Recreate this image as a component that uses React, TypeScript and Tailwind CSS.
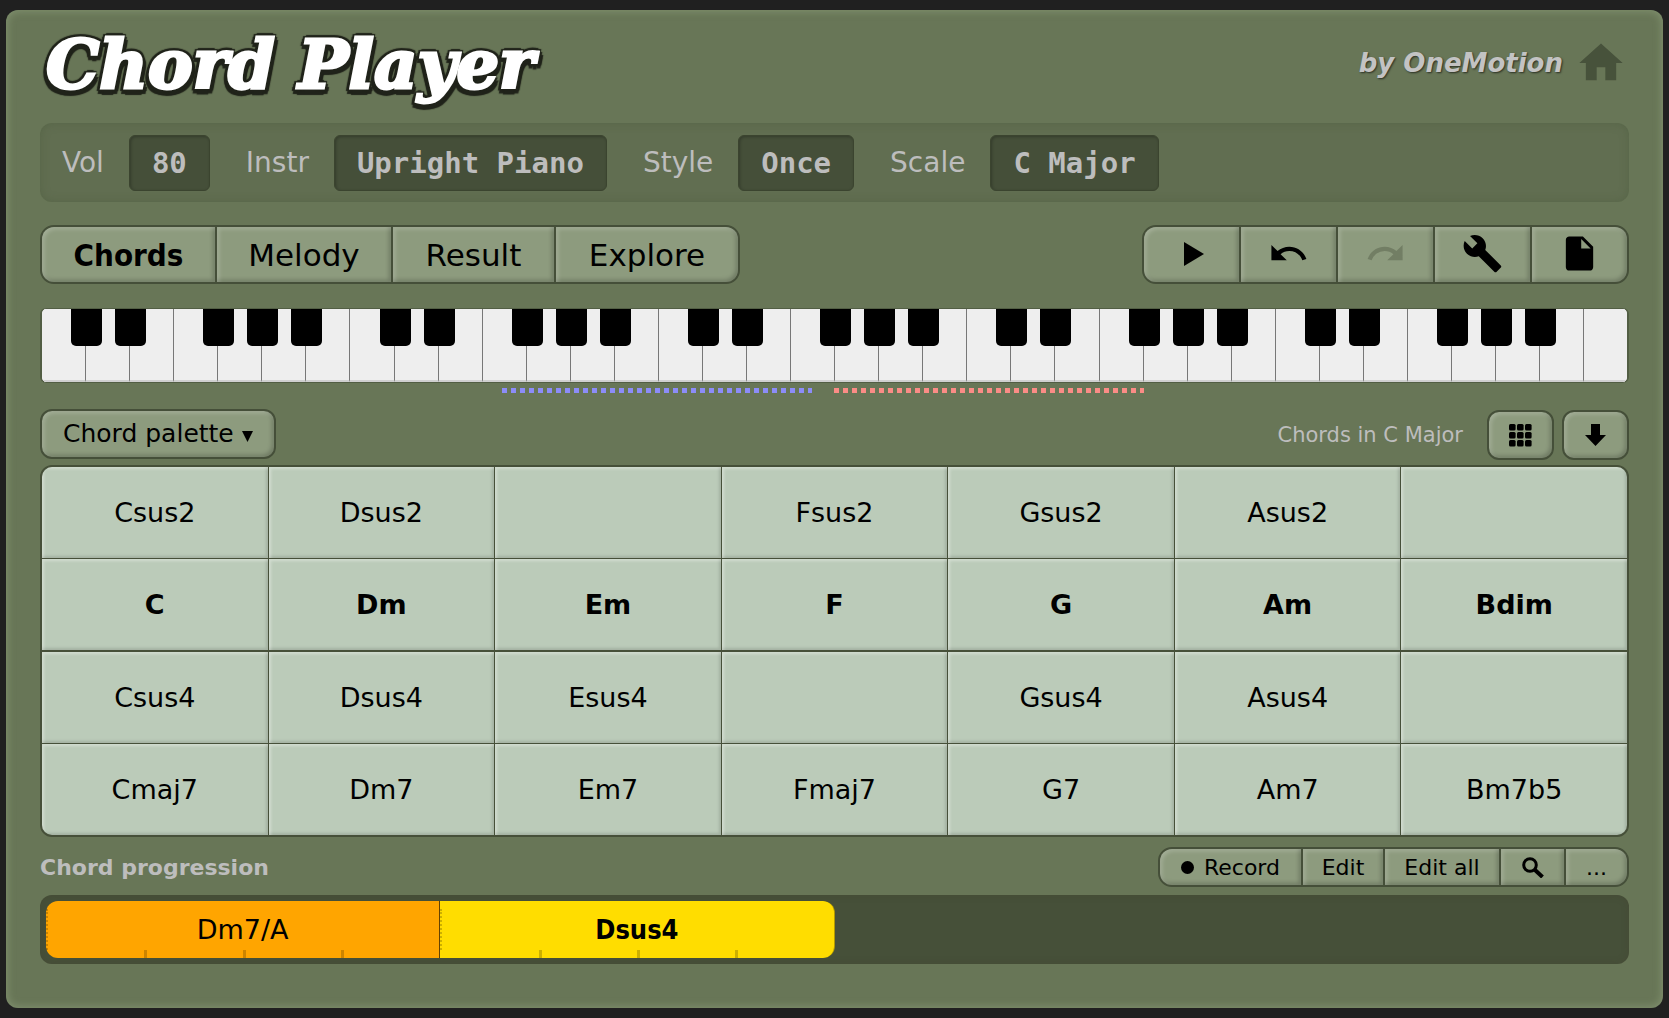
import React from "react";
import { MdBuild, MdHome, MdInsertDriveFile, MdRedo, MdUndo } from "react-icons/md";

const raised =
  "bg-[#8d9b7e] shadow-[inset_2px_2px_4px_rgba(255,255,255,0.22),inset_-2px_-2px_4px_rgba(0,0,0,0.22)]";

const settings = [
  { label: "Vol", value: "80" },
  { label: "Instr", value: "Upright Piano" },
  { label: "Style", value: "Once" },
  { label: "Scale", value: "C Major" },
];

const chordRows = [
  ["Csus2", "Dsus2", "", "Fsus2", "Gsus2", "Asus2", ""],
  ["C", "Dm", "Em", "F", "G", "Am", "Bdim"],
  ["Csus4", "Dsus4", "Esus4", "", "Gsus4", "Asus4", ""],
  ["Cmaj7", "Dm7", "Em7", "Fmaj7", "G7", "Am7", "Bm7b5"],
];

const whiteKeys = Array.from({ length: 36 }, (_, i) => ({
  id: i,
  sharp: i < 35 && i % 7 !== 2 && i % 7 !== 6,
}));

function Setting({ label, value }: { label: string; value: string }) {
  const id = `setting-${label}`;
  return (
    <div className="flex items-center gap-[25px]">
      <span id={id} className="text-[28px] leading-8 text-[#bdbdbd]">
        {label}
      </span>
      <button
        type="button"
        aria-labelledby={`${id} ${id}-value`}
        className="h-14 rounded-md border border-[#3b442f] bg-[#454f39] px-[22px] font-['DejaVu_Sans_Mono',monospace] text-[29px] font-bold leading-8 text-[#bdbdbd] shadow-[inset_1px_1px_3px_rgba(0,0,0,0.25)]"
      >
        <span id={`${id}-value`}>{value}</span>
      </button>
    </div>
  );
}

function Tab({ children, active, width }: { children: React.ReactNode; active?: boolean; width: string }) {
  return (
    <button
      type="button"
      aria-pressed={!!active}
      className={`${raised} ${width} text-[31px] leading-10 first:rounded-l-xl last:rounded-r-xl ${
        active ? "font-['DejaVu_Sans_Condensed','DejaVu_Sans',sans-serif] font-bold" : ""
      }`}
    >
      {children}
    </button>
  );
}

function ToolButton({ label, children, disabled }: { label: string; children: React.ReactNode; disabled?: boolean }) {
  return (
    <button
      type="button"
      aria-label={label}
      disabled={disabled}
      className={`${raised} flex w-[95px] items-center justify-center pb-0.5 first:rounded-l-xl last:rounded-r-xl disabled:text-[#727e64]`}
    >
      {children}
    </button>
  );
}

function SmallButton({ children, label, width }: { children: React.ReactNode; label?: string; width: string }) {
  return (
    <button
      type="button"
      aria-label={label}
      className={`${raised} ${width} flex items-center justify-center pt-px text-[22px] leading-7 first:rounded-l-xl last:rounded-r-xl`}
    >
      {children}
    </button>
  );
}

function Block({ name, color, selected }: { name: string; color: string; selected?: boolean }) {
  return (
    <button
      type="button"
      className={`relative h-full w-1/4 border-r border-black/60 text-[27px] leading-8 first:rounded-l-xl last:rounded-r-xl last:border-black/30 ${color} ${
        selected ? "font-['DejaVu_Sans_Condensed','DejaVu_Sans',sans-serif] font-bold" : ""
      }`}
    >
      {name}
      <span className="absolute inset-y-2 left-0 w-px border-l-2 border-dotted border-black/20" />
      <span className="absolute inset-x-0 bottom-0 grid h-2 grid-cols-4">
        <span />
        <span className="border-l-3 border-black/20" />
        <span className="border-l-3 border-black/20" />
        <span className="border-l-3 border-black/20" />
      </span>
    </button>
  );
}

export default function App() {
  return (
    <div className="min-h-screen bg-[#202020] px-[6px] pt-[10px] pb-[9px] font-['DejaVu_Sans',Verdana,sans-serif] text-black">
      <main className="rounded-xl bg-[#687657] px-[34px] pb-11 shadow-[inset_0_0_8px_1px_rgba(170,190,150,0.4)]">
        <header className="flex h-[113px] items-center justify-between">
          <h1 className="-mt-1 pl-1.5 font-['DejaVu_Serif',serif] text-[67px] font-bold italic leading-[80px] text-white [-webkit-text-stroke:3px_white] [text-shadow:4px_0_1px_#20231a,-4px_0_1px_#20231a,0_-4px_1px_#20231a,0_7px_1px_#20231a,3px_-3px_1px_#20231a,-3px_-3px_1px_#20231a,4px_6px_1px_#20231a,-4px_6px_1px_#20231a,5px_3px_1px_#20231a,-5px_3px_1px_#20231a]">
            Chord Player
          </h1>
          <a href="#home" className="-mt-2 flex items-center gap-3 pr-0.5 text-[26px] font-bold italic leading-8 text-[#c3c3c3] [text-shadow:1px_1px_2px_rgba(0,0,0,0.6)]">
            by OneMotion
            <MdHome className="size-[52px] text-[#47523b]" />
          </a>
        </header>

        <section className="flex h-[79px] items-center gap-9 rounded-xl bg-[#616e51] px-[22px] shadow-[inset_0_0_10px_rgba(70,85,55,0.35)]">
          {settings.map((s) => (
            <Setting key={s.label} {...s} />
          ))}
        </section>

        <div className="mt-[23px] flex h-[59px] justify-between">
          <nav className="flex gap-[2px] rounded-[14px] border-2 border-[#454f39] bg-[#454f39]">
            <Tab active width="w-[173px]">Chords</Tab>
            <Tab width="w-[174px]">Melody</Tab>
            <Tab width="w-[161px]">Result</Tab>
            <Tab width="w-[182px]">Explore</Tab>
          </nav>
          <div className="flex gap-[2px] rounded-[14px] border-2 border-[#454f39] bg-[#454f39]">
            <ToolButton label="Play">
              <svg viewBox="0 0 20 24" className="ml-1 h-6 w-5" fill="currentColor">
                <path d="M0 0 20 12 0 24Z" />
              </svg>
            </ToolButton>
            <ToolButton label="Undo">
              <MdUndo className="size-[41px]" />
            </ToolButton>
            <ToolButton label="Redo" disabled>
              <MdRedo className="size-[41px]" />
            </ToolButton>
            <ToolButton label="Tools">
              <MdBuild className="size-[41px]" />
            </ToolButton>
            <ToolButton label="File">
              <MdInsertDriveFile className="size-[41px]" />
            </ToolButton>
          </div>
        </div>

        <div className="mt-6 flex h-[75px] overflow-hidden rounded-md border border-x-2 border-[#525e44] bg-[#eeeeee]">
          {whiteKeys.map((k) => (
            <div
              key={k.id}
              className="relative flex-1 border-r border-b-2 border-r-[#777777] border-b-[#d0d0d0] bg-[#eeeeee] last:border-r-0"
            >
              {k.sharp && <div className="absolute top-0 -right-[17px] z-10 h-[37px] w-[31px] rounded-b-[5px] bg-black" />}
            </div>
          ))}
        </div>
        <div className="mt-[5px] flex h-[5px]">
          <div className="w-[29.1%]" />
          <div className="w-[19.5%] bg-[repeating-linear-gradient(90deg,#8c8cf8_0_5px,transparent_5px_9px)]" />
          <div className="w-[1.4%]" />
          <div className="w-[19.5%] bg-[repeating-linear-gradient(90deg,#fb8c86_0_5px,transparent_5px_9px)]" />
        </div>

        <div className="mt-4 flex h-[50px] items-center justify-between">
          <button
            type="button"
            className={`${raised} flex h-[50px] items-center gap-2 rounded-xl border-2 border-[#454f39] px-[21px] text-[25px] leading-8`}
          >
            Chord palette
            <svg viewBox="0 0 11 11" className="mt-1 size-[11px]">
              <path d="M0 0H11L5.5 11Z" />
            </svg>
          </button>
          <div className="flex items-center gap-2 pt-0.5">
            <span className="mr-4 text-[21px] leading-7 text-[#bdbdbd]">Chords in C Major</span>
            <button
              type="button"
              aria-label="Grid view"
              className={`${raised} flex h-[50px] w-[67px] items-center justify-center rounded-xl border-2 border-[#454f39]`}
            >
              <svg viewBox="0 0 23 23" className="size-[23px]">
                {[0, 8, 16].map((y) =>
                  [0, 8, 16].map((x) => <rect key={`${x}-${y}`} x={x} y={y} width="6.6" height="6.6" rx="1.5" />),
                )}
              </svg>
            </button>
            <button
              type="button"
              aria-label="Move down"
              className={`${raised} flex h-[50px] w-[67px] items-center justify-center rounded-xl border-2 border-[#454f39]`}
            >
              <svg viewBox="0 0 21 22" className="h-[22px] w-[21px]">
                <path d="M6 0H15V11H21L10.5 22 0 11H6Z" />
              </svg>
            </button>
          </div>
        </div>

        <section className="mt-[6px] flex flex-col gap-px overflow-hidden rounded-xl border-2 border-[#465039] bg-[#465039]">
          {chordRows.map((row, r) => (
            <div key={r} className="grid grid-cols-7 gap-px nth-3:mt-px">
              {row.map((chord, c) => (
                <button
                  key={c}
                  type="button"
                  aria-label={chord || "Empty"}
                  className={`h-[91px] bg-[#bbcbb9] pt-px text-[27px] leading-8 shadow-[inset_2px_2px_3px_rgba(255,255,255,0.35),inset_-2px_-2px_3px_rgba(0,0,0,0.13)] ${
                    r === 1 ? "font-bold" : ""
                  }`}
                >
                  {chord}
                </button>
              ))}
            </div>
          ))}
        </section>

        <div className="mt-[10px] flex h-10 items-center justify-between">
          <h2 className="pt-0.5 text-[22px] font-bold leading-7 text-[#bdbdbd]">Chord progression</h2>
          <div className="flex h-10 gap-[2px] rounded-[14px] border-2 border-[#454f39] bg-[#454f39]">
            <SmallButton width="w-[141px]">
              <span className="mr-2.5 size-[13px] rounded-full bg-black" />
              Record
            </SmallButton>
            <SmallButton width="w-[80px]">Edit</SmallButton>
            <SmallButton width="w-[114px]">Edit all</SmallButton>
            <SmallButton width="w-[63px]" label="Zoom">
              <svg viewBox="0 0 22 21" className="h-[21px] w-[22px]" fill="none" stroke="currentColor">
                <circle cx="8" cy="8" r="6.3" strokeWidth="3" />
                <path d="M12.5 12.5 20.5 20" strokeWidth="4" />
              </svg>
            </SmallButton>
            <SmallButton width="w-[61px]">...</SmallButton>
          </div>
        </div>

        <section className="mt-2 flex h-[69px] rounded-xl bg-[#465039] p-[6px] shadow-[inset_0_0_6px_rgba(70,70,50,0.5)]">
          <Block name="Dm7/A" color="bg-[#ffa500]" />
          <Block name="Dsus4" color="bg-[#ffdd00]" selected />
        </section>
      </main>
    </div>
  );
}
